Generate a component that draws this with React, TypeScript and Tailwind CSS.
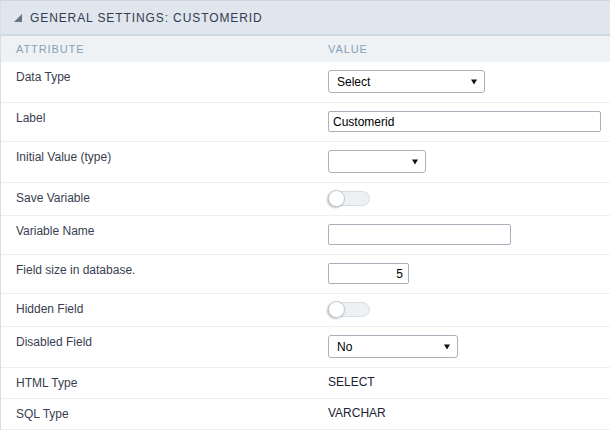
const rows: { label: string; kind: string; value?: string; width?: number }[] = [
  { label: "Data Type", kind: "select", value: "Select", width: 157 },
  { label: "Label", kind: "input", value: "Customerid", width: 273 },
  { label: "Initial Value (type)", kind: "select", value: "", width: 98 },
  { label: "Save Variable", kind: "toggle" },
  { label: "Variable Name", kind: "input", value: "", width: 183 },
  { label: "Field size in database.", kind: "number", value: "5", width: 81 },
  { label: "Hidden Field", kind: "toggle" },
  { label: "Disabled Field", kind: "select", value: "No", width: 130 },
  { label: "HTML Type", kind: "text", value: "SELECT" },
  { label: "SQL Type", kind: "text", value: "VARCHAR" },
];

function Arrow() {
  return (
    <svg width="6" height="6" viewBox="0 0 6 6" className="shrink-0">
      <polygon points="0,0.5 6,0.5 3,5.5" fill="#111" />
    </svg>
  );
}

function Toggle() {
  return (
    <div className="relative h-[15px] w-[42px] rounded-full border border-[#d6dde3] bg-[#eef1f4]">
      <span className="absolute -left-[1px] -top-[2px] h-[17px] w-[17px] rounded-full border border-[#c4c9ce] bg-white shadow-[-1px_1px_2px_rgba(0,0,0,0.25)]" />
    </div>
  );
}

function Value({ row }: { row: (typeof rows)[number] }) {
  if (row.kind === "select") {
    return (
      <div
        className="flex h-[23px] items-center justify-between rounded-[3px] border border-[#a9b1bb] bg-white pl-2 pr-[7px] text-[12px] text-black"
        style={{ width: row.width }}
      >
        <span>{row.value}</span>
        <Arrow />
      </div>
    );
  }
  if (row.kind === "input" || row.kind === "number") {
    return (
      <div
        className={`flex h-[21px] items-center rounded-[2px] border border-[#a9b1bb] bg-white px-1 text-[12px] text-black ${
          row.kind === "number" ? "justify-end pr-[5px]" : ""
        }`}
        style={{ width: row.width }}
      >
        {row.value}
      </div>
    );
  }
  if (row.kind === "toggle") return <Toggle />;
  return <div className="text-[12px] leading-[13px] text-[#1c2235]">{row.value}</div>;
}

export default function App() {
  return (
    <div className="min-h-[430px] w-[610px] overflow-hidden border-l border-[#d7dee5] bg-white font-['Liberation_Sans',Arial,sans-serif]">
      <div className="flex h-[36px] items-center gap-2 border-t border-b-2 border-t-[#cdd6df] border-b-[#cfd8e1] bg-[#dfe6ed] pl-[13px]">
        <svg width="8" height="8" viewBox="0 0 8 8">
          <polygon points="8,0 8,8 0,8" fill="#6b7482" />
        </svg>
        <span className="text-[12px] tracking-[0.9px] text-[#343b50]">GENERAL SETTINGS: CUSTOMERID</span>
      </div>
      <div className="flex h-[26px] items-center bg-[#eef2f5] text-[11px] tracking-[0.9px] text-[#86a1b6]">
        <div className="w-[327px] pl-[15px]">ATTRIBUTE</div>
        <div>VALUE</div>
      </div>
      {rows.map((row) => (
        <div key={row.label} className="flex border-b border-[#edf0f3]">
          <div className="w-[327px] shrink-0 pl-[15px] pt-[9px] text-[12px] leading-[12px] text-[#383e4f]">
            {row.label}
          </div>
          <div className="pb-[9px] pt-2">
            <Value row={row} />
          </div>
        </div>
      ))}
    </div>
  );
}
